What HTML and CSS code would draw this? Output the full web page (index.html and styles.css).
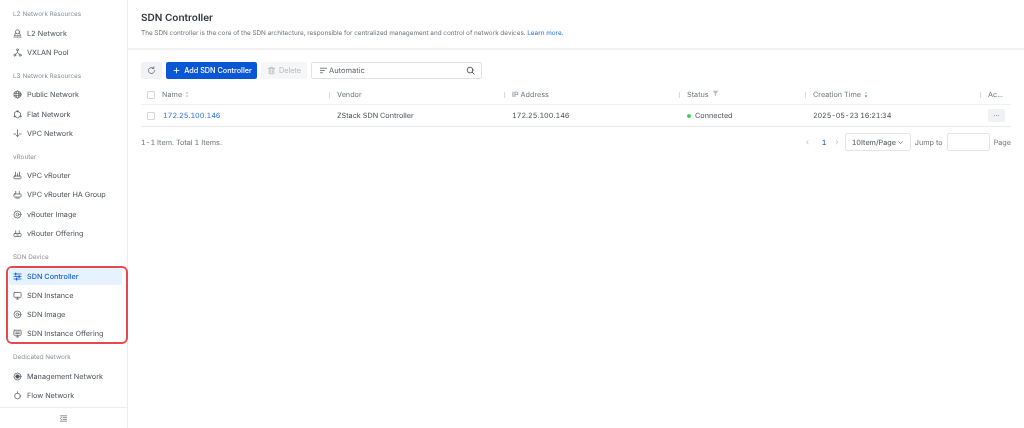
FILE: index.html
```html
<!DOCTYPE html>
<html lang="en">
<head>
<meta charset="utf-8">
<title>SDN Controller</title>
<link rel="stylesheet" href="styles.css">
</head>
<body>
<svg class="defs" width="0" height="0" aria-hidden="true">
  <defs>
    <symbol id="i-l2" viewBox="0 0 10 10"><circle cx="5" cy="3.2" r="2.3"/><path d="M2.8 4.5 1.5 7.5h7L7.2 4.5M1 9h1.6M4.2 9h1.6M7.4 9H9"/></symbol>
    <symbol id="i-vxlan" viewBox="0 0 10 10"><circle cx="5" cy="2" r="1.1"/><circle cx="2" cy="8" r="1.1"/><circle cx="8" cy="8" r="1.1"/><path d="M5 3.1v2L2.5 7M5 5.1 7.5 7"/></symbol>
    <symbol id="i-globe" viewBox="0 0 10 10"><circle cx="5" cy="5" r="3.9"/><ellipse cx="5" cy="5" rx="1.7" ry="3.9"/><path d="M1.1 3.7h7.8M1.1 6.3h7.8"/></symbol>
    <symbol id="i-flat" viewBox="0 0 10 10"><path d="M5 1.4 8.3 3.3v3.6L5 8.8 1.7 6.9V3.3z"/><circle cx="5" cy="1.4" r=".7"/><circle cx="1.7" cy="7" r=".7"/><circle cx="8.3" cy="7" r=".7"/></symbol>
    <symbol id="i-vpc" viewBox="0 0 10 10"><path d="M5 1v7M1 5.6h2M7 5.6h2M3.6 7 5 8.6 6.4 7"/></symbol>
    <symbol id="i-router" viewBox="0 0 10 10"><rect x="1" y="5.6" width="8" height="3" rx=".8"/><path d="M2.8 1.4v4.2M7.2 1.4v4.2M5 3v2.6"/></symbol>
    <symbol id="i-ha" viewBox="0 0 10 10"><rect x="1" y="4.4" width="8" height="3.4" rx=".8"/><path d="M3 1.6v2.8M7 1.6v2.8M3 9h4"/></symbol>
    <symbol id="i-disc" viewBox="0 0 10 10"><circle cx="5" cy="5" r="3.9"/><circle cx="5" cy="5" r="1.6"/></symbol>
    <symbol id="i-offer" viewBox="0 0 10 10"><rect x="1" y="5" width="8" height="3.4" rx=".8"/><path d="M3 2v3M7 2v3M4.2 6.7h1.6"/></symbol>
    <symbol id="i-sliders" viewBox="0 0 10 10"><path d="M1 2.2h8M1 5h8M1 7.8h8"/><path d="M3 1.2v2M6.8 4v2M4 6.8v2" stroke-width="1.4"/></symbol>
    <symbol id="i-monitor" viewBox="0 0 10 10"><rect x="1" y="1.6" width="8" height="5.4" rx=".7"/><path d="M3.4 8.8h3.2M5 7v1.8"/></symbol>
    <symbol id="i-offer2" viewBox="0 0 10 10"><rect x="1" y="1.4" width="8" height="5.6" rx=".7"/><path d="M3.4 8.8h3.2M5 7v1.8M3 3.4h4M3 5h4"/></symbol>
    <symbol id="i-mgmt" viewBox="0 0 10 10"><circle cx="5" cy="5" r="3.9"/><circle cx="5" cy="5" r="2" fill="currentColor"/></symbol>
    <symbol id="i-flow" viewBox="0 0 10 10"><circle cx="5" cy="5.6" r="3.2"/><path d="M5 .8v1.6"/></symbol>
  </defs>
</svg>

<div class="app">
  <aside class="sidebar">
    <nav class="nav">
      <div class="group-label first">L2 Network Resources</div>
      <a class="item"><svg class="ico"><use href="#i-l2"/></svg>L2 Network</a>
      <a class="item"><svg class="ico"><use href="#i-vxlan"/></svg>VXLAN Pool</a>

      <div class="group-label">L3 Network Resources</div>
      <a class="item"><svg class="ico"><use href="#i-globe"/></svg>Public Network</a>
      <a class="item"><svg class="ico"><use href="#i-flat"/></svg>Flat Network</a>
      <a class="item"><svg class="ico"><use href="#i-vpc"/></svg>VPC Network</a>

      <div class="group-label">vRouter</div>
      <a class="item"><svg class="ico"><use href="#i-router"/></svg>VPC vRouter</a>
      <a class="item"><svg class="ico"><use href="#i-ha"/></svg>VPC vRouter HA Group</a>
      <a class="item"><svg class="ico"><use href="#i-disc"/></svg>vRouter Image</a>
      <a class="item"><svg class="ico"><use href="#i-offer"/></svg>vRouter Offering</a>

      <div class="group-label">SDN Device</div>
      <div class="callout">
        <a class="item active"><svg class="ico"><use href="#i-sliders"/></svg>SDN Controller</a>
        <a class="item"><svg class="ico"><use href="#i-monitor"/></svg>SDN Instance</a>
        <a class="item"><svg class="ico"><use href="#i-disc"/></svg>SDN Image</a>
        <a class="item"><svg class="ico"><use href="#i-offer2"/></svg>SDN Instance Offering</a>
      </div>

      <div class="group-label after-callout">Dedicated Network</div>
      <a class="item"><svg class="ico"><use href="#i-mgmt"/></svg>Management Network</a>
      <a class="item"><svg class="ico"><use href="#i-flow"/></svg>Flow Network</a>
    </nav>
    <div class="side-foot">
      <svg class="ico collapse" viewBox="0 0 10 10"><path d="M1.5 2h7M4.5 4h4M4.5 6h4M1.5 8h7M3 3.6 1.4 5 3 6.4"/></svg>
    </div>
  </aside>

  <main class="main">
    <header class="page-head">
      <h1 class="title">SDN Controller</h1>
      <p class="desc">The SDN controller is the core of the SDN architecture, responsible for centralized management and control of network devices. <a class="link">Learn more.</a></p>
    </header>

    <section class="content">
      <div class="toolbar">
        <button class="btn icon-btn" aria-label="Refresh">
          <svg class="ico" viewBox="0 0 10 10"><path d="M8.4 5A3.4 3.4 0 1 1 7.3 2.5M7.6 1v1.8H5.8"/></svg>
        </button>
        <button class="btn primary"><svg class="plus" viewBox="0 0 10 10"><path d="M5 1v8M1 5h8"/></svg>Add SDN Controller</button>
        <button class="btn disabled">
          <svg class="ico" viewBox="0 0 10 10"><path d="M1.5 2.6h7M3.9 2.6V1.4h2.2v1.2M2.4 2.6v6h5.2v-6M4 4.4v2.6M6 4.4v2.6"/></svg>Delete
        </button>
        <div class="search">
          <svg class="ico" viewBox="0 0 10 10"><path d="M1.5 2.5h7M1.5 5h4.6M1.5 7.5h2.4"/></svg>
          <span class="search-text">Automatic</span>
          <svg class="ico search-ico" viewBox="0 0 10 10"><circle cx="4.5" cy="4.5" r="3.2"/><path d="m7 7 2 2"/></svg>
        </div>
      </div>

      <div class="table">
        <div class="row head">
          <div class="cell check"><span class="box"></span></div>
          <div class="cell name">Name<svg class="sort" viewBox="0 0 6 10"><path class="up" d="M3 1 5 3.6H1z"/><path class="down" d="M3 9 5 6.4H1z"/></svg></div>
          <div class="cell sep">Vendor</div>
          <div class="cell sep">IP Address</div>
          <div class="cell sep">Status<svg class="filter" viewBox="0 0 10 10"><path d="M1 1.2h8L6 5v3.8L4 7.6V5z"/></svg></div>
          <div class="cell sep">Creation Time<svg class="sort sorted" viewBox="0 0 6 10"><path class="up" d="M3 1 5 3.6H1z"/><path class="down" d="M3 9 5 6.4H1z"/></svg></div>
          <div class="cell sep last">Ac...</div>
        </div>
        <div class="row body">
          <div class="cell check"><span class="box"></span></div>
          <div class="cell name"><a class="link row-link">172.25.100.146</a></div>
          <div class="cell">ZStack SDN Controller</div>
          <div class="cell">172.25.100.146</div>
          <div class="cell"><span class="dot"></span>Connected</div>
          <div class="cell date">2025-05-23 16:21:34</div>
          <div class="cell last"><button class="more" aria-label="More">···</button></div>
        </div>
      </div>

      <div class="table-foot">
        <span class="count">1-1 Item. Total 1 Items.</span>
        <div class="pager">
          <span class="chev">‹</span>
          <span class="page-num">1</span>
          <span class="chev">›</span>
          <div class="select">10Item/Page<svg class="caret" viewBox="0 0 10 10"><path d="m2 3.5 3 3 3-3"/></svg></div>
          <span>Jump to</span>
          <span class="jump"></span>
          <span>Page</span>
        </div>
      </div>
    </section>
  </main>
</div>
</body>
</html>
```

FILE: styles.css
```css
* { box-sizing: border-box; }
html, body { margin: 0; height: 100%; }
body {
  font-family: Inter, "Liberation Sans", sans-serif;
  font-size: 7.25px;
  font-variant-numeric: tabular-nums;
  text-rendering: geometricPrecision;
  color: #4a4f57;
  background: #fff;
  overflow: hidden;
}
.defs { display: block; height: 0; }
.app { display: flex; height: 428px; filter: blur(.4px); }

/* Sidebar */
.sidebar {
  width: 128px;
  flex: none;
  display: flex;
  flex-direction: column;
  border-right: 1px solid #eceef1;
}
.nav { flex: 1; min-height: 0; }
.group-label {
  height: 16.2px;
  line-height: 16.5px;
  margin: 7px 0 0 13px;
  font-size: 6.35px;
  color: #8b9098;
}
.group-label.first { margin-top: 6.5px; line-height: 15px; }
.group-label.after-callout { margin-top: 5.4px; }
.item {
  display: flex;
  align-items: center;
  gap: 5px;
  height: 17px;
  margin: 2.2px 6px 0 12px;
  padding-left: 1px;
  color: #4a4f57;
  border-radius: 2px;
  white-space: nowrap;
}
.ico {
  width: 9px;
  height: 9px;
  flex: none;
  fill: none;
  stroke: #5f646c;
  stroke-width: .9;
  stroke-linecap: round;
  stroke-linejoin: round;
}
.callout {
  margin: 1px 0 0 6px;
  width: 122px;
  height: 78px;
  border: 2px solid #e5484d;
  border-radius: 6px;
}
.callout .item { margin: 2px 4px 0 4px; padding-left: 1px; }
.callout .item:first-child { margin-top: 0; margin-left: 1px; padding-left: 4px; }
.item.active {
  background: #e6f3fe;
  color: #1661d8;
  font-weight: 500;
}
.item.active .ico { stroke: #1661d8; }
.side-foot {
  flex: none;
  height: 21px;
  display: flex;
  align-items: center;
  justify-content: center;
  border-top: 1px solid #eceef1;
}
.collapse { stroke: #777c84; }

/* Main */
.main { flex: 1; min-width: 0; }
.page-head {
  height: 50px;
  padding: 10.5px 0 0 13px;
  border-bottom: 2px solid #f1f2f4;
}
.title {
  margin: 0;
  font-size: 10px;
  line-height: 15px;
  font-weight: 600;
  color: #2d3138;
}
.desc {
  margin: 2.5px 0 0;
  font-size: 6.4px;
  line-height: 10px;
  color: #6f747c;
  white-space: nowrap;
}
.link { color: #2a6fdb; }
.content { padding: 12px 13px 0; }

.toolbar { display: flex; gap: 4px; height: 17px; align-items: stretch; }
.btn {
  display: flex;
  align-items: center;
  justify-content: center;
  gap: 3px;
  padding: 0;
  border: 0;
  border-radius: 2px;
  font: inherit;
}
.icon-btn { width: 21px; background: #f1f2f5; }
.primary {
  width: 91px;
  padding-left: 2px;
  background: #0a57d6;
  color: #fff;
  font-weight: 500;
}
.plus {
  width: 7px;
  height: 7px;
  margin-right: 1px;
  fill: none;
  stroke: #fff;
  stroke-width: 1.2;
}
.disabled { width: 46px; background: #f5f6f7; color: #b4b8be; }
.disabled .ico { stroke: #b4b8be; }
.search {
  width: 171px;
  display: flex;
  align-items: center;
  gap: 1px;
  padding: 0 6px 0 7px;
  border: 1px solid #dfe1e5;
  border-radius: 2px;
  color: #5f646c;
}
.search-text { flex: 1; font-size: 7.5px; }
.search-ico { stroke: #3b3f46; }

.table { margin-top: 6px; }
.row {
  display: grid;
  grid-template-columns: 21px 175px 175px 175px 126px 175px 23px;
  align-items: center;
  border-bottom: 1px solid #e9ebee;
}
.row.head { height: 20px; color: #6f747c; border-bottom-color: #eef0f2; }
.row.body { height: 22px; }
.cell {
  display: flex;
  align-items: center;
  gap: 3px;
  white-space: nowrap;
  min-width: 0;
}
.date { letter-spacing: -.15px; }
.check { padding-left: 6px; }
.box {
  width: 8px;
  height: 8px;
  border: 1px solid #d3d6da;
  border-radius: 1px;
  background: #fff;
}
.sep { position: relative; }
.sep::before {
  content: "";
  position: absolute;
  left: -8px;
  top: 2px;
  width: 1px;
  height: 6px;
  background: #d9dbdf;
}
.sort { width: 4px; height: 7px; }
.sort path { fill: #b5b9bf; }
.sort.sorted .down { fill: #2a6fdb; }
.filter { width: 7px; height: 7px; fill: #b9bcc2; margin-top: -2px; }
.row-link { margin-left: 1px; }
.dot {
  width: 4px;
  height: 4px;
  margin-right: 1px;
  border-radius: 50%;
  background: #3fcf4e;
}
.more {
  width: 17px;
  height: 13px;
  padding: 0;
  border: 0;
  border-radius: 2px;
  background: #eff1f4;
  color: #5f646c;
  font: inherit;
  line-height: 13px;
}

.table-foot {
  display: flex;
  justify-content: space-between;
  align-items: center;
  height: 18px;
  margin-top: 6px;
  color: #6f747c;
}
.pager { display: flex; align-items: center; gap: 4px; }
.chev { color: #c3c6cb; font-size: 9px; margin: 0 2px; }
.page-num { color: #2a6fdb; font-weight: 500; margin: 0 3px 0 6.5px; }
.select {
  display: flex;
  align-items: center;
  gap: 1px;
  height: 18px;
  width: 66px;
  justify-content: center;
  border: 1px solid #e3e5e8;
  border-radius: 2px;
  color: #4a4f57;
}
.caret { width: 7px; height: 7px; fill: none; stroke: #5f646c; stroke-width: 1; }
.jump {
  width: 43px;
  height: 18px;
  border: 1px solid #e3e5e8;
  border-radius: 2px;
}
```
